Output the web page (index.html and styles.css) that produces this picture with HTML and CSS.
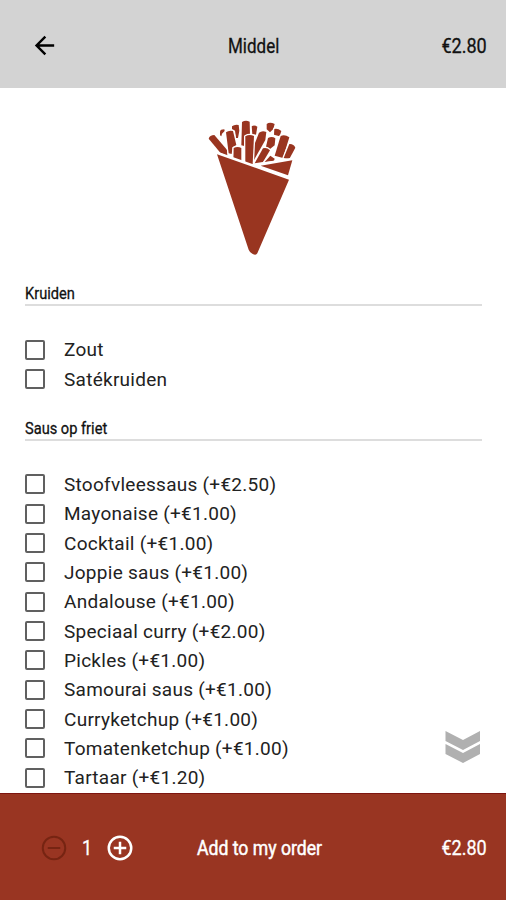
FILE: index.html
```
<!DOCTYPE html>
<html lang="nl">
<head>
    <meta charset="UTF-8">
    <meta name="viewport" content="width=device-width, initial-scale=1.0">
    <title>Middel</title>
    <link rel="stylesheet" href="styles.css">
</head>
<body>

    <!-- Top bar -->
    <header class="topbar">
        <svg class="back" viewBox="0 0 24 24"><path d="M20 11H7.83l5.59-5.59L12 4l-8 8 8 8 1.41-1.41L7.83 13H20z"/></svg>
        <h1 class="narrow title">Middel</h1>
        <span class="narrow price">€2.80</span>
    </header>

    <main class="content">
        <svg class="cone" viewBox="0 0 360 465">
            <!-- fries, back to front -->
            <g class="fries">
                <path d="M84 65Q85 58 97 58L98 63 90 71 88 79 84 76z"/>
                <path d="M120 49Q128 42 140 45L142 62 138 84 132 84 129 62 120 58z"/>
                <path d="M179 49Q187 44 196 50L192 74 181 72z"/>
                <path d="M224 42Q233 35 248 42L244 57 234 67 224 58z"/>
                <path d="M247 57Q257 54 268 63L263 79 246 74z"/>
                <path d="M50 86Q53 75 67 75L106 121 106 138 85 128z"/>
                <path d="M102 67Q110 60 123 63L133 105 122 112 119 132 110 130z"/>
                <path d="M150 36Q161 29 173 35L174 76 160 76 157 108 148 106z"/>
                <path d="M201 68Q211 60 223 66L220 90 186 150 184 112z"/>
                <path d="M228 84Q240 78 250 85L248 106 234 117 222 110z"/>
                <path d="M266 78Q278 72 292 82L273 144 248 137z"/>
                <path d="M292 102Q305 101 310 113L292 147 275 144z"/>
                <path d="M213 115Q224 111 234 121L213 156 188 160z"/>
                <path d="M235 137L248 146 246 152 218 156z"/>
                <path d="M160 79Q172 72 186 78L182 162 160 162z"/>
                <path d="M125 114Q137 108 148 114V160L124 154z"/>
            </g>
            <path class="paper" d="M206 167L301 151 288 196z"/>
            <path class="paper" d="M75 133L291 209 196 430Q192 438 181 431 174 429 170 419z"/>
        </svg>

        <!-- Herbs -->
        <section class="group">
            <h2><span class="narrow">Kruiden</span></h2>
            <label class="option"><input type="checkbox">Zout</label>
            <label class="option"><input type="checkbox">Satékruiden</label>
        </section>

        <!-- Sauces -->
        <section class="group">
            <h2><span class="narrow">Saus op friet</span></h2>
            <label class="option"><input type="checkbox">Stoofvleessaus (+€2.50)</label>
            <label class="option"><input type="checkbox">Mayonaise (+€1.00)</label>
            <label class="option"><input type="checkbox">Cocktail (+€1.00)</label>
            <label class="option"><input type="checkbox">Joppie saus (+€1.00)</label>
            <label class="option"><input type="checkbox">Andalouse (+€1.00)</label>
            <label class="option"><input type="checkbox">Speciaal curry (+€2.00)</label>
            <label class="option"><input type="checkbox">Pickles (+€1.00)</label>
            <label class="option"><input type="checkbox">Samourai saus (+€1.00)</label>
            <label class="option"><input type="checkbox">Curryketchup (+€1.00)</label>
            <label class="option"><input type="checkbox">Tomatenketchup (+€1.00)</label>
            <label class="option"><input type="checkbox">Tartaar (+€1.20)</label>
        </section>

        <svg class="more" viewBox="0 0 36 33"><path d="M0.5 0l17.500 9L35 0v10L18 19 0.500 10zM0.500 13l17.500 9 17-9v10L18 32 0.500 23z"/></svg>
    </main>

    <!-- Order bar -->
    <footer class="orderbar">
        <div class="counter">
            <svg class="minus" viewBox="0 0 24 24"><circle cx="12" cy="12" r="9"/><path d="M7 12h10"/></svg>
            <span class="narrow amount">1</span>
            <svg class="plus" viewBox="0 0 24 24"><circle cx="12" cy="12" r="9"/><path d="M7 12h10M12 7v10"/></svg>
        </div>
        <span class="narrow add">Add to my order</span>
        <span class="narrow price">€2.80</span>
    </footer>

</body>
</html>
```
FILE: styles.css
```
* {
    box-sizing: border-box;
}
body {
    margin: 0;
    height: 900px;
    display: flex;
    flex-direction: column;
    overflow: hidden;
    font-family: Roboto, sans-serif;
    background-color: #fff;
    color: #111;
}
/* condensed display text */
.narrow {
    display: inline-block;
    white-space: nowrap;
    transform: scaleX(0.86);
}
.topbar, .orderbar {
    display: grid;
    grid-template-columns: 1fr auto 1fr;
    align-items: center;
    flex: none;
    font-size: 21px;
}
.topbar {
    height: 88px;
    padding: 3px 19px 0 30px;
    background-color: #d3d3d3;
}
.back {
    width: 29px;
    height: 29px;
}
.title {
    margin: 0 9px 0 0;
    font-size: 21px;
    font-weight: 400;
    transform: scaleX(0.81);
    -webkit-text-stroke: 0.3px;
}
.price {
    justify-self: end;
    transform-origin: right;
    -webkit-text-stroke: 0.3px;
}
.content {
    position: relative;
    height: 705px;
    padding: 22px 24px 0 25px;
    overflow: hidden;
}
.cone {
    display: block;
    width: 120px;
    height: 155px;
    margin-left: 167px;
}
.fries path {
    fill: #993520;
    stroke: #fff;
    stroke-width: 8;
    stroke-linejoin: round;
    paint-order: stroke;
}
.paper {
    fill: #993520;
    stroke: #fff;
    stroke-width: 16;
    paint-order: stroke;
}
.group + .group {
    margin-top: 6px;
}
.group h2 {
    height: 41px;
    margin: 0 0 29px;
    padding-top: 18px;
    border-bottom: 2px solid #ddd;
    font-size: 17px;
    font-weight: 400;
    line-height: 20px;
    -webkit-text-stroke: 0.3px;
}
.group h2 .narrow {
    transform-origin: left;
}
.option {
    display: flex;
    align-items: center;
    height: 29.35px;
    font-size: 19px;
    letter-spacing: 0.27px;
    color: #222;
}
.option input {
    appearance: none;
    width: 20px;
    height: 20px;
    margin: 0 19px 0 0;
    border: 2px solid #606060;
    border-radius: 2px;
}
.more {
    position: absolute;
    left: 445px;
    top: 643px;
    width: 36px;
    height: 33px;
    fill: #b0b0b0;
}
.orderbar {
    flex: 1;
    padding: 2px 19px 0 39px;
    border-top: 1px solid #7d1510;
    background-color: #993522;
    color: #fff;
}
.counter {
    display: flex;
    align-items: center;
}
.counter svg {
    width: 30px;
    height: 30px;
    fill: none;
    stroke: #fff;
    stroke-width: 2;
}
.counter .minus {
    stroke: #762412;
    stroke-width: 1.6;
}
.amount {
    width: 36px;
    text-align: center;
    -webkit-text-stroke: 0.3px;
}
.add {
    margin-right: 7px;
    transform: scaleX(0.84);
    -webkit-text-stroke: 0.5px;
}
```
